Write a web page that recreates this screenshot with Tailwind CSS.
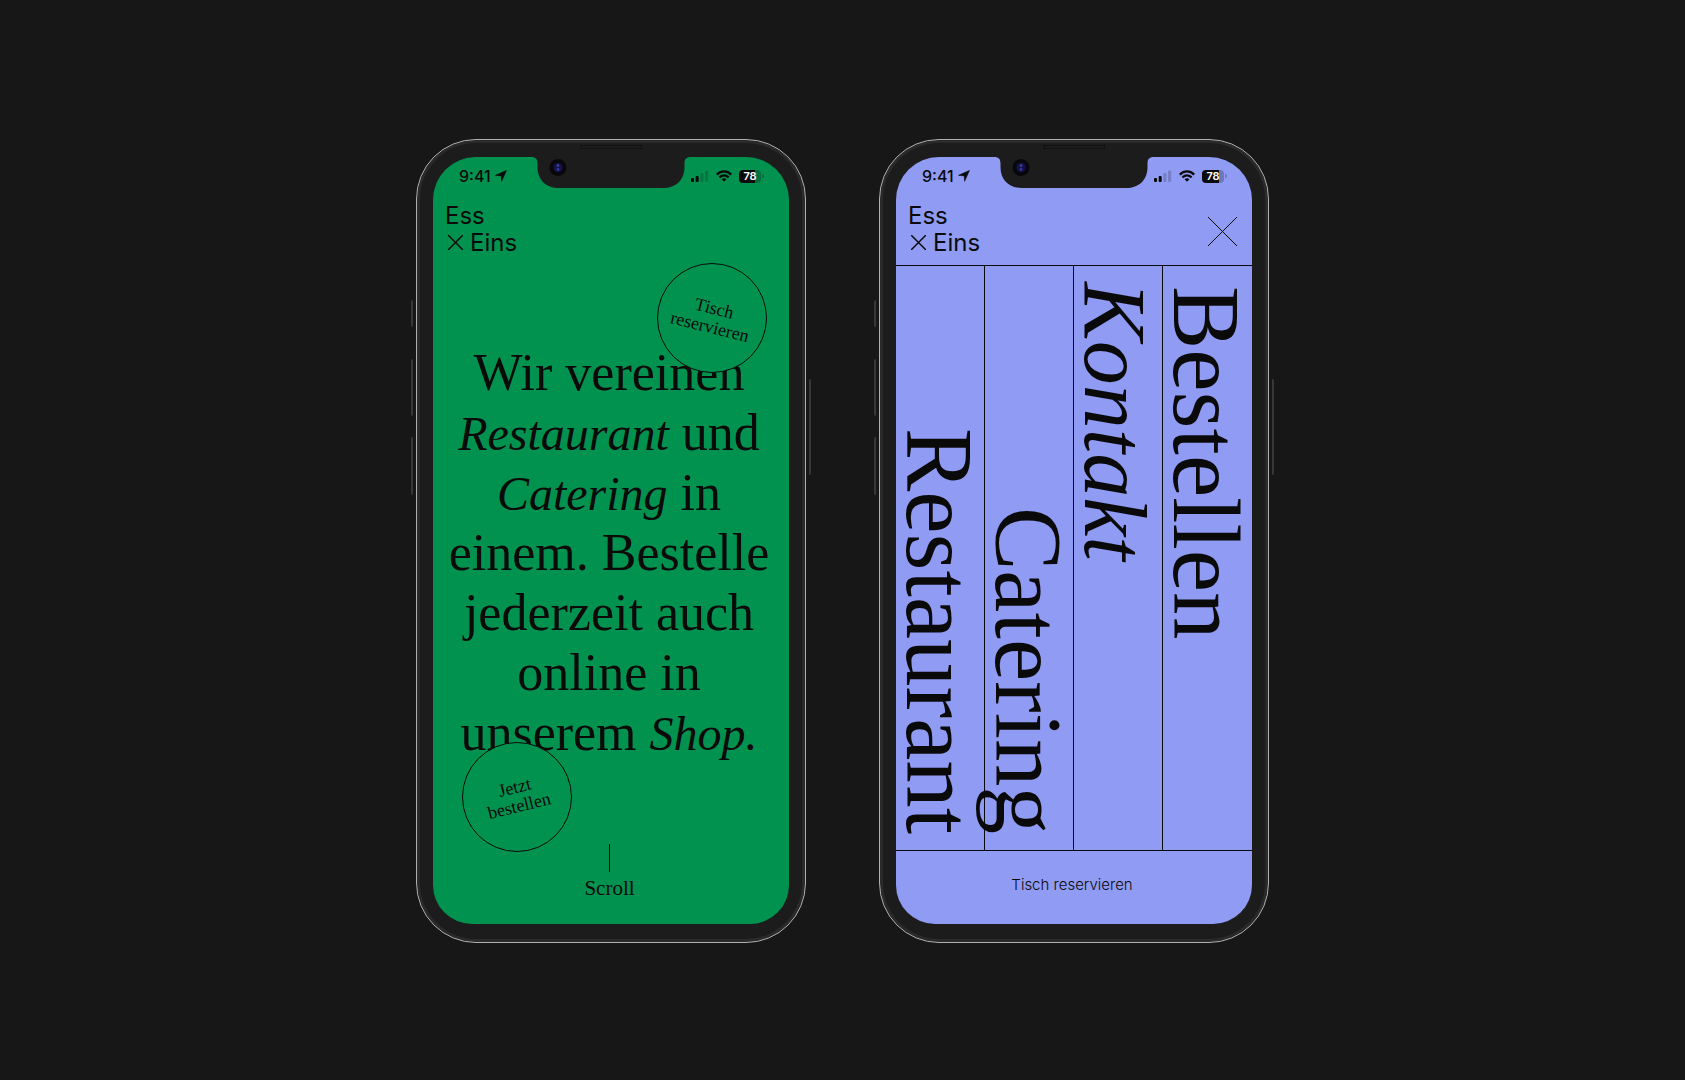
<!DOCTYPE html>
<html lang="de">

<head>
    <meta charset="UTF-8">
    <meta name="viewport" content="width=device-width, initial-scale=1">
    <title>Ess × Eins</title>
    <script src="https://cdn.jsdelivr.net/npm/@tailwindcss/browser@4"></script>
</head>

<body class="flex min-h-screen flex-wrap items-center justify-center bg-[#171717] font-['Inter',sans-serif] text-[#0a0a0a]">

    <!-- shared shapes for both phones -->
    <svg class="hidden" aria-hidden="true">
        <symbol id="notch" viewBox="0 0 160 32">
            <path fill="#1c1c1c" d="M0 0C5 0 6.500 2 6.500 7V10C6.500 23 15 31 28 31H132C145 31 153.500 23 153.500 10V7C153.500 2 155 0 160 0Z" />
            <circle cx="27" cy="10.500" r="8.500" fill="#08080c" />
            <circle cx="27" cy="10.500" r="4.500" fill="#14144a" />
            <circle cx="27" cy="8.500" r="1.200" fill="#3c48b0" />
            <circle cx="27" cy="12.500" r="1.400" fill="#3038a8" />
        </symbol>
        <symbol id="arrow" viewBox="0 0 12 12">
            <path fill="currentColor" stroke="currentColor" stroke-width=".6" stroke-linejoin="round" d="M11.400.5L6.600 11.300L6.300 5.900L.6 5.300Z" />
        </symbol>
        <symbol id="signal" viewBox="0 0 18 12">
            <g fill="currentColor">
                <rect x="0" y="8" width="3" height="4" rx="1" />
                <rect x="4.700" y="6" width="3" height="6" rx="1" />
                <rect x="9.400" y="3" width="3" height="9" rx="1" opacity=".2" />
                <rect x="14.100" y="0.500" width="3" height="11.500" rx="1" opacity=".2" />
            </g>
        </symbol>
        <symbol id="wifi" viewBox="0 0 16 12">
            <g fill="none" stroke="currentColor" stroke-width="2.200">
                <path d="M.8 4.600C5 .4 11 .4 15.200 4.600" />
                <path d="M3.400 7.400C6.200 4.900 9.800 4.900 12.600 7.400" />
            </g>
            <path fill="currentColor" d="M5.600 9.200C7 8 9 8 10.400 9.200L8 11.700Z" />
        </symbol>
        <symbol id="cross" viewBox="0 0 30 30">
            <path stroke="currentColor" vector-effect="non-scaling-stroke" d="M0 0L30 30M30 0L0 30" />
        </symbol>
    </svg>

    <main class="flex flex-wrap justify-center gap-x-[73px] gap-y-12 pt-[2px]">

        <!-- phone 1: start screen -->
        <section class="relative flex w-[390px] flex-col rounded-[60px] border border-[#b0b0b0] bg-[#1c1c1c] px-4 pt-[17px] pb-[18px] shadow-[inset_0_0_0_3px_#2a2a2a]">
            <i class="absolute top-[160px] -left-[6px] h-[27px] w-[2px] rounded-l bg-[#383838]"></i>
            <i class="absolute top-[219px] -left-[6px] h-[57px] w-[2px] rounded-l bg-[#383838]"></i>
            <i class="absolute top-[297px] -left-[6px] h-[58px] w-[2px] rounded-l bg-[#383838]"></i>
            <i class="absolute top-[239px] -right-[6px] h-[96px] w-[2px] rounded-r bg-[#383838]"></i>
            <i class="absolute top-[5px] left-1/2 h-[4px] w-[61px] -translate-x-1/2 border border-dotted border-[#0a0a0a] bg-[#1c1c1c]"></i>

            <div class="relative flex flex-1 flex-col rounded-t-[43px] rounded-b-[39px] bg-[#02924f]">
                <svg class="absolute top-0 left-1/2 h-[32px] w-[160px] -translate-x-1/2"><use href="#notch" /></svg>

                <div class="flex h-[38px] items-center justify-between pr-[25px] pl-[26px]">
                    <div class="flex items-center gap-1 text-[16px] font-medium">
                        <span>9:41</span>
                        <svg class="size-3 overflow-visible"><use href="#arrow" /></svg>
                    </div>
                    <div class="flex items-center gap-[7px]">
                        <svg class="h-[12px] w-[18px]"><use href="#signal" /></svg>
                        <svg class="h-[12px] w-[16px]"><use href="#wifi" /></svg>
                        <div class="flex items-center gap-px">
                            <span class="flex h-[13px] w-[22px] items-center justify-center rounded bg-linear-to-r from-[#0a0a0a] from-75% to-[#0a0a0a]/25 to-75% text-[11px] font-semibold text-white">78</span>
                            <i class="h-[4px] w-[2px] rounded-r bg-[#0a0a0a]/25"></i>
                        </div>
                    </div>
                </div>

                <header class="px-3 pt-[7px] text-[24px] leading-[27px]">
                    <a href="#" class="block">
                        <span class="block">Ess</span>
                        <span class="flex items-center gap-[7px]">
                            <svg class="ml-[3px] size-[15px] overflow-visible" stroke-width="1.500"><use href="#cross" /></svg>Eins
                        </span>
                    </a>
                </header>

                <h1 class="mt-[87px] pr-1 text-center font-['Liberation_Serif',serif] text-[52px] leading-[60px] whitespace-nowrap">
                    Wir vereinen<br>
                    <em class="text-[48px] leading-[48px]">Restaurant</em> und<br>
                    <em class="text-[48px] leading-[48px]">Catering</em> in<br>
                    einem. Bestelle<br>
                    jederzeit auch<br>
                    online in<br>
                    unserem <em class="text-[48px] leading-[48px]">Shop.</em>
                </h1>

                <a href="#" class="absolute top-[106px] right-[22px] flex size-[110px] items-center justify-center rounded-full border border-[#0a0a0a] bg-[#02924f] text-center font-['Liberation_Serif',serif] text-[18px] leading-[19px]">
                    <span class="rotate-14">Tisch<br>reservieren</span>
                </a>
                <a href="#" class="absolute bottom-[72px] left-[29px] flex size-[110px] items-center justify-center rounded-full border border-[#0a0a0a] bg-[#02924f] text-center font-['Liberation_Serif',serif] text-[18px] leading-[19px]">
                    <span class="-rotate-14">Jetzt<br>bestellen</span>
                </a>

                <a href="#" class="mt-[81px] flex flex-col items-center gap-[2px] pr-[3px] pb-[22px] font-['Liberation_Serif',serif] text-[21px] leading-[28px]">
                    <i class="h-[28px] w-px bg-[#0a0a0a]"></i>
                    Scroll
                </a>
            </div>
        </section>

        <!-- phone 2: open menu -->
        <section class="relative flex w-[390px] flex-col rounded-[60px] border border-[#b0b0b0] bg-[#1c1c1c] px-4 pt-[17px] pb-[18px] shadow-[inset_0_0_0_3px_#2a2a2a]">
            <i class="absolute top-[160px] -left-[6px] h-[27px] w-[2px] rounded-l bg-[#383838]"></i>
            <i class="absolute top-[219px] -left-[6px] h-[57px] w-[2px] rounded-l bg-[#383838]"></i>
            <i class="absolute top-[297px] -left-[6px] h-[58px] w-[2px] rounded-l bg-[#383838]"></i>
            <i class="absolute top-[239px] -right-[6px] h-[96px] w-[2px] rounded-r bg-[#383838]"></i>
            <i class="absolute top-[5px] left-1/2 h-[4px] w-[61px] -translate-x-1/2 border border-dotted border-[#0a0a0a] bg-[#1c1c1c]"></i>

            <div class="relative flex flex-1 flex-col rounded-t-[43px] rounded-b-[39px] bg-[#909bf4]">
                <svg class="absolute top-0 left-1/2 h-[32px] w-[160px] -translate-x-1/2"><use href="#notch" /></svg>

                <div class="flex h-[38px] items-center justify-between pr-[25px] pl-[26px]">
                    <div class="flex items-center gap-1 text-[16px] font-medium">
                        <span>9:41</span>
                        <svg class="size-3 overflow-visible"><use href="#arrow" /></svg>
                    </div>
                    <div class="flex items-center gap-[7px]">
                        <svg class="h-[12px] w-[18px]"><use href="#signal" /></svg>
                        <svg class="h-[12px] w-[16px]"><use href="#wifi" /></svg>
                        <div class="flex items-center gap-px">
                            <span class="flex h-[13px] w-[22px] items-center justify-center rounded bg-linear-to-r from-[#0a0a0a] from-75% to-[#0a0a0a]/25 to-75% text-[11px] font-semibold text-white">78</span>
                            <i class="h-[4px] w-[2px] rounded-r bg-[#0a0a0a]/25"></i>
                        </div>
                    </div>
                </div>

                <header class="flex items-center justify-between border-b border-[#0a0a0a] px-3 pt-[7px] pb-[9px] text-[24px] leading-[27px]">
                    <a href="#" class="block">
                        <span class="block">Ess</span>
                        <span class="flex items-center gap-[7px]">
                            <svg class="ml-[3px] size-[15px] overflow-visible" stroke-width="1.500"><use href="#cross" /></svg>Eins
                        </span>
                    </a>
                    <button type="button" aria-label="Menü schließen" class="mt-1 mr-[3px]">
                        <svg class="size-[29px] overflow-visible"><use href="#cross" /></svg>
                    </button>
                </header>

                <nav class="grid flex-1 grid-cols-4 divide-x divide-[#0a0a0a] font-['Liberation_Serif',serif] text-[95px] leading-[86px]">
                    <a href="#" class="flex items-end justify-start py-4"><span class="[writing-mode:vertical-rl]">Restaurant</span></a>
                    <a href="#" class="flex items-end justify-start py-4"><span class="[writing-mode:vertical-rl]">Catering</span></a>
                    <a href="#" class="flex items-start justify-start py-4 text-[88px] leading-[80px] italic"><span class="[writing-mode:vertical-rl]">Kontakt</span></a>
                    <a href="#" class="flex items-start justify-start py-5"><span class="[writing-mode:vertical-rl]">Bestellen</span></a>
                </nav>

                <a href="#" class="border-t border-[#0a0a0a] pt-[22px] pr-1 pb-[27px] text-center text-[15px] leading-[24px] font-light">Tisch reservieren</a>
            </div>
        </section>
    </main>
</body>

</html>
